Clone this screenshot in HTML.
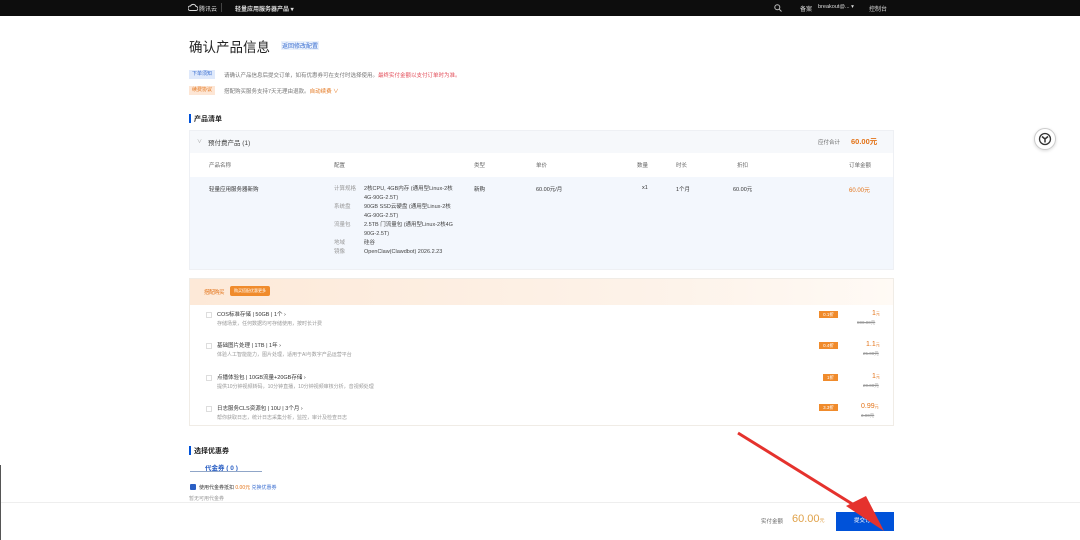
<!DOCTYPE html>
<html><head><meta charset="utf-8"><style>
*{margin:0;padding:0;box-sizing:border-box}
body{width:1080px;height:540px;overflow:hidden;background:#fff;font-family:"Liberation Sans","Noto Sans CJK SC",sans-serif;color:#333;position:relative;font-size:6px}
.a{position:absolute;white-space:nowrap}
.hdr{position:absolute;left:0;top:0;width:1080px;height:16px;background:#0d0d0d;color:#ddd}
.o{color:#e37318}
.g{color:#999}
.b{color:#3b6fd1}
</style></head><body>
<div class="hdr">
 <svg class="a" style="left:188px;top:3px" width="10" height="9" viewBox="0 0 10 9"><path d="M2 7.5h6a2 2 0 0 0 0-4 3 3 0 0 0-5.5-.5A2 2 0 0 0 2 7.5z" fill="none" stroke="#ddd" stroke-width="1"/></svg>
 <div class="a" style="left:199px;top:4px;font-size:6px">腾讯云</div>
 <div class="a" style="left:221px;top:3px;width:1px;height:9px;background:#444"></div>
 <div class="a" style="left:235px;top:4px;font-size:6px;font-weight:bold">轻量应用服务器产品 ▾</div>
 <svg class="a" style="left:774px;top:4px" width="8" height="8" viewBox="0 0 8 8"><circle cx="3.3" cy="3.3" r="2.5" fill="none" stroke="#bbb"/><path d="M5 5l2.5 2.5" stroke="#bbb"/></svg>
 <div class="a" style="left:800px;top:4px;font-size:6px">备案</div>
 <div class="a" style="left:818px;top:4px;font-size:5.5px">breakout@... ▾</div>
 <div class="a" style="left:869px;top:4px;font-size:6px">控制台</div>
</div>

<div class="a" style="left:189px;top:36px;font-size:13.5px;color:#222">确认产品信息</div>
<div class="a b" style="left:281px;top:41px;font-size:6px;background:#eaf1fc;padding:0 1px">返回修改配置</div>

<div class="a" style="left:189px;top:70px;width:26px;height:9px;background:#dfe9fb;color:#3b6fd1;font-size:5px;text-align:center;line-height:9px">下单须知</div>
<div class="a g" style="left:224px;top:71px;font-size:5.5px;color:#777">请确认产品信息后提交订单，如有优惠券可在支付时选择使用。<span style="color:#e34d59">最终实付金额以支付订单时为准。</span></div>
<div class="a" style="left:189px;top:86px;width:26px;height:9px;background:#fde6d5;color:#e37318;font-size:5px;text-align:center;line-height:9px">续费协议</div>
<div class="a" style="left:224px;top:87px;font-size:5.5px;color:#777">搭配购买服务支持7天无理由退款。<span class="o">自动续费 ∨</span></div>

<div class="a" style="left:189px;top:114px;width:2px;height:9px;background:#0052d9"></div>
<div class="a" style="left:194px;top:114px;font-size:7px;font-weight:bold;color:#222">产品清单</div>

<div class="a" style="left:189px;top:130px;width:705px;height:140px;border:1px solid #eef0f4"></div>
<div class="a" style="left:190px;top:131px;width:703px;height:22px;background:#f6f8fb"></div>
<div class="a g" style="left:197px;top:138px;font-size:5px">∨</div>
<div class="a" style="left:208px;top:137px;font-size:6.5px;color:#444">预付费产品 (1)</div>
<div class="a" style="left:818px;top:138px;font-size:5.5px;color:#666">应付合计</div>
<div class="a o" style="left:851px;top:136px;font-size:7.5px;font-weight:bold">60.00元</div>

<div class="a" style="left:209px;top:161px;font-size:5.5px;color:#666">产品名称</div>
<div class="a" style="left:334px;top:161px;font-size:5.5px;color:#666">配置</div>
<div class="a" style="left:474px;top:161px;font-size:5.5px;color:#666">类型</div>
<div class="a" style="left:536px;top:161px;font-size:5.5px;color:#666">单价</div>
<div class="a" style="left:637px;top:161px;font-size:5.5px;color:#666">数量</div>
<div class="a" style="left:676px;top:161px;font-size:5.5px;color:#666">时长</div>
<div class="a" style="left:737px;top:161px;font-size:5.5px;color:#666">折扣</div>
<div class="a" style="left:849px;top:161px;font-size:5.5px;color:#666">订单金额</div>

<div class="a" style="left:190px;top:177px;width:703px;height:92px;background:#f3f7fd"></div>
<div class="a" style="left:209px;top:185px;font-size:5.5px">轻量应用服务器新购</div>
<div class="a" style="left:334px;top:185px;font-size:5.5px;line-height:9px;color:#999">
 计算规格<br><br>系统盘<br><br>流量包<br><br>地域<br>镜像</div>
<div class="a" style="left:364px;top:185px;font-size:5.5px;line-height:9px;color:#444">
 2核CPU, 4GB内存 (通用型Linux-2核<br>4G-90G-2.5T)<br>90GB SSD云硬盘 (通用型Linux-2核<br>4G-90G-2.5T)<br>2.5TB 门流量包 (通用型Linux-2核4G<br>90G-2.5T)<br>硅谷<br>OpenClaw(Clawdbot) 2026.2.23</div>
<div class="a" style="left:474px;top:185px;font-size:5.5px">新购</div>
<div class="a" style="left:536px;top:185px;font-size:5.5px">60.00元/月</div>
<div class="a" style="left:642px;top:185px;font-size:5.5px">x1</div>
<div class="a" style="left:676px;top:185px;font-size:5.5px">1个月</div>
<div class="a" style="left:733px;top:185px;font-size:5.5px">60.00元</div>
<div class="a o" style="left:849px;top:185px;font-size:6px">60.00元</div>

<div class="a" style="left:189px;top:278px;width:705px;height:148px;border:1px solid #f0ece6"></div>
<div class="a" style="left:190px;top:279px;width:703px;height:26px;background:linear-gradient(90deg,#fde9d8,#fdf3ea 70%,#fffaf5)"></div>
<div class="a o" style="left:204px;top:288px;font-size:5.5px;letter-spacing:-0.5px">搭配购买</div>
<div class="a" style="left:230px;top:286px;width:40px;height:10px;background:#f08b2c;border-radius:2px;color:#fff;font-size:4px;text-align:center;line-height:10px">购买搭配优惠更多</div>

<div class="a" style="left:206px;top:312px;width:6px;height:6px;border:1px solid #ddd"></div>
<div class="a" style="left:217px;top:310px;font-size:5.5px">COS标准存储 | 50GB | 1个 ›</div>
<div class="a g" style="left:217px;top:320px;font-size:5px">存储场景，任何数据均可存储使用，按时长计费</div>
<div class="a" style="left:819px;top:311px;width:19px;height:7px;background:#f08b2c;color:#fff;font-size:4.5px;text-align:center;line-height:7px">0.1折</div>
<div class="a o" style="left:872px;top:310px;font-size:7px">1<span style="font-size:4px">元</span></div>
<div class="a g" style="left:857px;top:320px;font-size:4.5px;text-decoration:line-through">800.00元</div>

<div class="a" style="left:206px;top:343px;width:6px;height:6px;border:1px solid #ddd"></div>
<div class="a" style="left:217px;top:341px;font-size:5.5px">基础图片处理 | 1TB | 1年 ›</div>
<div class="a g" style="left:217px;top:351px;font-size:5px">体验人工智能能力，图片处理，适用于AI与数字产品运营平台</div>
<div class="a" style="left:819px;top:342px;width:19px;height:7px;background:#f08b2c;color:#fff;font-size:4.5px;text-align:center;line-height:7px">0.4折</div>
<div class="a o" style="left:866px;top:341px;font-size:7px">1.1<span style="font-size:4px">元</span></div>
<div class="a g" style="left:863px;top:351px;font-size:4.5px;text-decoration:line-through">25.00元</div>

<div class="a" style="left:206px;top:375px;width:6px;height:6px;border:1px solid #ddd"></div>
<div class="a" style="left:217px;top:373px;font-size:5.5px">点播体验包 | 10GB流量+20GB存储 ›</div>
<div class="a g" style="left:217px;top:383px;font-size:5px">提供10分钟视频转码，10分钟直播，10分钟视频审核分析，音视频处理</div>
<div class="a" style="left:823px;top:374px;width:15px;height:7px;background:#f08b2c;color:#fff;font-size:4.5px;text-align:center;line-height:7px">1折</div>
<div class="a o" style="left:872px;top:373px;font-size:7px">1<span style="font-size:4px">元</span></div>
<div class="a g" style="left:863px;top:383px;font-size:4.5px;text-decoration:line-through">20.00元</div>

<div class="a" style="left:206px;top:406px;width:6px;height:6px;border:1px solid #ddd"></div>
<div class="a" style="left:217px;top:404px;font-size:5.5px">日志服务CLS资源包 | 10U | 3个月 ›</div>
<div class="a g" style="left:217px;top:414px;font-size:5px">帮你获取日志，统计日志采集分析，监控，审计及检查日志</div>
<div class="a" style="left:819px;top:404px;width:19px;height:7px;background:#f08b2c;color:#fff;font-size:4.5px;text-align:center;line-height:7px">3.3折</div>
<div class="a o" style="left:861px;top:403px;font-size:7px">0.99<span style="font-size:4px">元</span></div>
<div class="a g" style="left:861px;top:413px;font-size:4.5px;text-decoration:line-through">3.00元</div>

<div class="a" style="left:189px;top:446px;width:2px;height:9px;background:#0052d9"></div>
<div class="a" style="left:194px;top:446px;font-size:7px;font-weight:bold;color:#222">选择优惠券</div>
<div class="a b" style="left:205px;top:462px;font-size:6.5px;font-weight:bold;color:#2a5fc4">代金券 ( 0 )</div>
<div class="a" style="left:190px;top:471px;width:72px;height:1px;background:#90a6c8"></div>
<div class="a" style="left:190px;top:484px;width:6px;height:6px;background:#2a5fc4;border-radius:1px"></div>
<div class="a" style="left:199px;top:484px;font-size:5px">使用代金券抵扣 <span class="o">0.00元</span> <span class="b">兑换优惠券</span></div>
<div class="a g" style="left:189px;top:495px;font-size:5px">暂无可用代金券</div>

<div class="a" style="left:0;top:502px;width:1080px;height:1px;background:#eee"></div>
<div class="a" style="left:0;top:465px;width:1px;height:75px;background:#555"></div>
<div class="a" style="left:761px;top:517px;font-size:5.5px;color:#666">实付金额</div>
<div class="a o" style="left:792px;top:513px;font-size:11px;color:#e0a24a">60.00<span style="font-size:5px">元</span></div>
<div class="a" style="left:836px;top:512px;width:58px;height:19px;background:#0052d9;color:#fff;font-size:5.5px;text-align:center;line-height:19px">提交订单</div>

<div class="a" style="left:1034px;top:128px;width:22px;height:22px;border-radius:50%;border:1px solid #ccc;background:#fff;box-shadow:0 1px 3px rgba(0,0,0,.15)"></div>
<svg class="a" style="left:1038px;top:132px" width="14" height="14" viewBox="0 0 14 14"><circle cx="7" cy="7" r="5.5" fill="none" stroke="#333" stroke-width="1.3"/><path d="M4 4.5L7 7l3-2.5M7 7v3.5" fill="none" stroke="#333" stroke-width="1.5"/></svg>

<svg class="a" style="left:0;top:0" width="1080" height="540"><path d="M738 433 L862 510" stroke="#e5322d" stroke-width="3"/><polygon points="846,506 884,531 866,496" fill="#e5322d"/></svg>
</body></html>
